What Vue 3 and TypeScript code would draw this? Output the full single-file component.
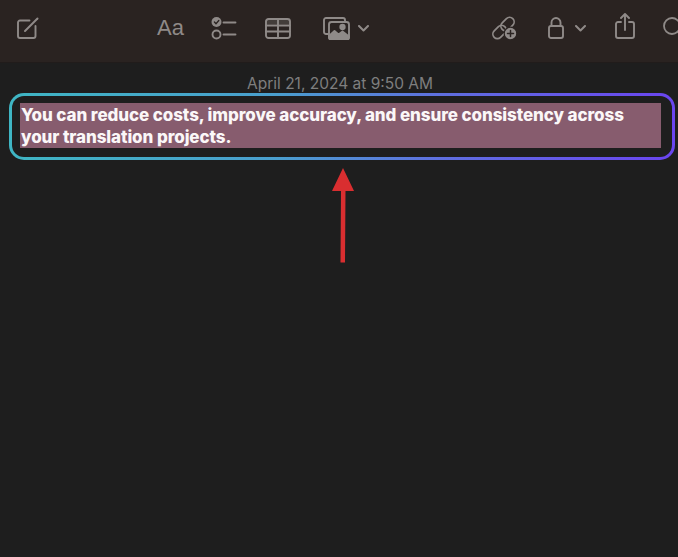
<script setup lang="ts">
const date: string = 'April 21, 2024 at 9:50 AM'
const lines: string[] = [
  'You can reduce costs, improve accuracy, and ensure consistency across',
  'your translation projects.',
]
</script>

<template>
  <div class="window">
    <header class="toolbar">
      <svg class="ic compose" width="22" height="22" viewBox="0 0 22 22" fill="none">
        <path d="M12.5 3.5H3a2 2 0 0 0-2 2V19a2 2 0 0 0 2 2h13.5a2 2 0 0 0 2-2V9" />
        <path d="M8 14 20.5 1.5" stroke-width="2" />
      </svg>
      <span class="aa">Aa</span>
      <svg class="ic check" width="26" height="23" viewBox="0 0 26 23" fill="none">
        <circle cx="5.500" cy="5" r="5" fill="#8f8a88" stroke="none" />
        <path d="M3.400 5l1.600 1.700 2.800-3.200" stroke="#2a2321" stroke-width="1.300" />
        <circle cx="5.500" cy="17.500" r="4" />
        <path d="M12.500 5.500h12M12.500 17.500h12" />
      </svg>
      <svg class="ic table" width="26" height="21" viewBox="0 0 26 21" fill="none">
        <rect x="1" y="1" width="24" height="19" rx="2.500" />
        <path d="M1 7.500h24M1 13.500h24M13 1v19" />
        <path d="M2 4h22" stroke-width="4" stroke-opacity=".25" />
      </svg>
      <svg class="ic media" width="27" height="23" viewBox="0 0 27 23" fill="none">
        <path d="M5 17H3a2 2 0 0 1-2-2V3a2 2 0 0 1 2-2h17a2 2 0 0 1 2 2v2" />
        <rect x="6" y="5" width="20" height="17" rx="2.500" />
        <path d="M6 19l5.500-5 4 3.500 4-3 6.500 5v1a2 2 0 0 1-2 2H8a2 2 0 0 1-2-2z" fill="#8f8a88" />
        <circle cx="19.500" cy="10" r="2.200" fill="#8f8a88" />
      </svg>
      <svg class="ic chev chev1" width="11" height="7" viewBox="0 0 11 7" fill="none">
        <path d="M1 1l4.500 4.500L10 1" stroke-width="2" />
      </svg>
      <svg class="ic link" width="26" height="24" viewBox="0 0 26 24" fill="none">
        <rect x="9" y="3.500" width="15" height="9" rx="4.500" transform="rotate(-45 16.500 8)" stroke-width="1.700" />
        <rect x="1" y="11.500" width="15" height="9" rx="4.500" transform="rotate(-45 8.500 16)" stroke-width="1.700" />
        <circle cx="19.500" cy="17.500" r="6.300" fill="#8f8a88" stroke="#2a2321" stroke-width="1.200" />
        <path d="M19.500 14.500v6M16.500 17.500h6" stroke="#2a2321" stroke-width="1.500" />
      </svg>
      <svg class="ic lock" width="16" height="22" viewBox="0 0 16 22" fill="none">
        <rect x="1" y="9" width="14" height="12" rx="2" />
        <path d="M3.500 9V5.500a4.500 4.500 0 0 1 9 0V9" />
      </svg>
      <svg class="ic chev chev2" width="11" height="7" viewBox="0 0 11 7" fill="none">
        <path d="M1 1l4.500 4.500L10 1" stroke-width="2" />
      </svg>
      <svg class="ic share" width="20" height="26" viewBox="0 0 20 26" fill="none">
        <path d="M6 9H3a2 2 0 0 0-2 2v12a2 2 0 0 0 2 2h14a2 2 0 0 0 2-2V11a2 2 0 0 0-2-2h-3" />
        <path d="M10 17V1.500M6 5l4-4 4 4" />
      </svg>
      <svg class="ic search" width="22" height="22" viewBox="0 0 22 22" fill="none">
        <circle cx="9" cy="9" r="8" stroke-width="1.800" />
        <path d="M15 15l6 6" stroke-width="2" />
      </svg>
    </header>

    <main class="note">
      <p class="date">{{ date }}</p>
      <div class="frame">
        <div class="selection">
          <p v-for="line in lines" :key="line" class="line">{{ line }}</p>
        </div>
      </div>
    </main>

    <svg class="arrow" width="24" height="96" viewBox="0 0 24 96">
      <path d="M12 0 23 23H14.500L14 94.500H9.500L10 23H1z" fill="#d92e30" />
    </svg>
  </div>
</template>

<style>
html,
body {
  margin: 0;
  background: #1e1e1e;
}
</style>

<style scoped>
.window {
  position: relative;
  width: 678px;
  height: 557px;
  overflow: hidden;
  background: #1e1e1e;
  font-family: Inter, 'Liberation Sans', sans-serif;
}
.toolbar {
  display: flex;
  align-items: center;
  box-sizing: border-box;
  height: 63px;
  padding-left: 17px;
  padding-bottom: 6px;
  background: #2a2321;
  border-bottom: 1px solid #211c1b;
  overflow: hidden;
}
.ic {
  flex: none;
  stroke: #8f8a88;
  stroke-width: 1.9;
  stroke-linecap: round;
  stroke-linejoin: round;
}
.aa {
  margin-left: 118px;
  width: 28px;
  flex: none;
  font-family: 'Liberation Sans', sans-serif;
  font-size: 22px;
  line-height: 24px;
  color: #8f8a88;
}
.check { margin-left: 26px; }
.table { margin-left: 28px; }
.media { margin-left: 32px; }
.chev1 { margin-left: 8px; }
.link { margin-left: 122px; }
.lock { margin-left: 31px; }
.chev2 { margin-left: 11px; }
.share { margin-left: 29px; margin-top: -4px; }
.search { margin-left: 28px; }
.note {
  padding: 12px 3px 0 9px;
}
.date {
  margin: 0;
  text-align: center;
  font-size: 15.5px;
  line-height: 18px;
  color: #7f7f7f;
  padding-right: 4px;
}
.frame {
  box-sizing: border-box;
  height: 67px;
  padding: 7px 11px 0 8px;
  border: 3.5px solid transparent;
  border-radius: 15px;
  background:
    linear-gradient(#1e1e1e, #1e1e1e) padding-box,
    linear-gradient(90deg, #3fb6c4 0%, #4a9fce 40%, #5f6fe0 65%, #6a45f0 100%) border-box;
}
.selection {
  box-sizing: border-box;
  height: 45px;
  padding: 1px 0 0 1px;
  background: #875c6e;
}
.line {
  margin: 0;
  font-size: 17px;
  font-weight: 800;
  letter-spacing: -0.09px;
  line-height: 22px;
  color: #fbf7f8;
  white-space: nowrap;
}
.arrow {
  position: absolute;
  left: 331px;
  top: 168px;
}
</style>
